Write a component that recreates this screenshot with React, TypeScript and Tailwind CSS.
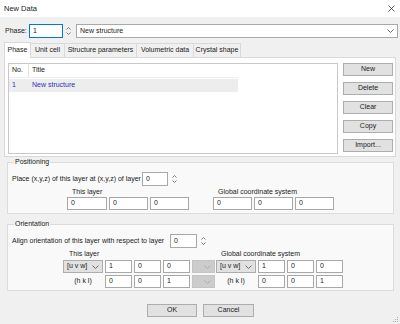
import React from "react";

const font = { fontFamily: '"Liberation Sans", Arial, sans-serif' };

const Spin = () => (
    <div className="flex flex-col items-center justify-center w-[8px] h-[14px] gap-[2px]">
        <svg width="5" height="3" viewBox="0 0 5 3"><path d="M0.5 2.5 L2.5 0.5 L4.5 2.5" fill="none" stroke="#6d6d6d" strokeWidth="0.9" /></svg>
        <svg width="5" height="3" viewBox="0 0 5 3"><path d="M0.5 0.5 L2.5 2.5 L4.5 0.5" fill="none" stroke="#6d6d6d" strokeWidth="0.9" /></svg>
    </div>
);

const Chevron = ({ color = "#606060" }: { color?: string }) => (
    <svg width="7" height="4" viewBox="0 0 7 4"><path d="M0.5 0.5 L3.5 3.5 L6.5 0.5" fill="none" stroke={color} strokeWidth="0.9" /></svg>
);

const Box = ({ value, w }: { value: string; w: string }) => (
    <div className={`${w} h-[13px] bg-white border border-[#a8a8a8] flex items-center pl-[3px] text-[7px] text-[#1a1a1a]`}>{value}</div>
);

const Combo = () => (
    <div className="w-[40px] h-[13px] bg-[#e1e1e1] border border-[#adadad] flex items-center justify-between pl-[3px] pr-[3px] text-[7px] text-[#1a1a1a] whitespace-nowrap">
        <span>[u v w]</span>
        <Chevron />
    </div>
);

const DisabledCombo = () => (
    <div className="w-[23px] h-[13px] bg-[#cccccc] border border-[#c4c4c4] flex items-center justify-end pr-[3px]">
        <Chevron color="#a8a8a8" />
    </div>
);

const HklLabel = () => (
    <div className="w-[40px] h-[13px] flex items-center justify-center text-[7px] text-[#1a1a1a]">(h k l)</div>
);

const Btn = ({ label, w = "w-[50px]" }: { label: string; w?: string }) => (
    <div className={`${w} h-[13px] bg-[#e1e1e1] border border-[#adadad] flex items-center justify-center text-[7px] text-[#1a1a1a]`}>{label}</div>
);

const tabs = [
    { label: "Phase", w: "w-[27px]", active: true },
    { label: "Unit cell", w: "w-[34px]", active: false },
    { label: "Structure parameters", w: "w-[72px]", active: false },
    { label: "Volumetric data", w: "w-[57px]", active: false },
    { label: "Crystal shape", w: "w-[47px]", active: false },
];

export default function App() {
    return (
        <div style={font} className="relative w-[400px] h-[324px] bg-[#f0f0f0] flex flex-col text-[7px] text-[#1a1a1a] overflow-hidden whitespace-nowrap">
            {/* title bar */}
            <div className="h-[17px] bg-white flex items-center justify-between pl-[4px] pr-[5px]">
                <span className="text-[7.5px]">New Data</span>
                <svg width="7" height="7" viewBox="0 0 7 7"><path d="M0.5 0.5 L6.5 6.5 M6.5 0.5 L0.5 6.5" stroke="#333" strokeWidth="0.8" /></svg>
            </div>

            {/* phase row */}
            <div className="mt-[7px] h-[14px] flex items-center pl-[5px]">
                <span className="w-[24px]">Phase:</span>
                <div className="w-[34px] h-[14px] bg-white border border-[#0078d7] flex items-center pl-[3px]">1</div>
                <div className="ml-[1px]"><Spin /></div>
                <div className="ml-[4px] w-[322px] h-[14px] bg-white border border-[#a8a8a8] flex items-center justify-between pl-[3px] pr-[3px]">
                    <span>New structure</span>
                    <Chevron />
                </div>
            </div>

            {/* tabs */}
            <div className="mt-[3px] h-[16px] flex items-end pl-[4px]">
                {tabs.map((t) =>
                    t.active ? (
                        <div key={t.label} className={`${t.w} h-[16px] bg-white border border-b-0 border-[#d9d9d9] flex items-center justify-center relative top-[1px]`}>
                            {t.label}
                        </div>
                    ) : (
                        <div key={t.label} className={`${t.w} h-[14px] bg-[#f0f0f0] border border-l-0 border-b-0 border-[#d9d9d9] flex items-center justify-center`}>
                            {t.label}
                        </div>
                    )
                )}
            </div>

            {/* tab page */}
            <div className="mx-[4px] h-[100px] bg-white border border-[#d9d9d9] flex pt-[5px] pl-[3px]">
                <div className="w-[330px] h-[91px] border border-[#c8c8c8] flex flex-col">
                    <div className="w-[229px] h-[14px] flex items-center border-b border-[#f0f0f0]">
                        <span className="w-[20px] pl-[3px] border-r border-[#e5e5e5] h-full flex items-center">No.</span>
                        <span className="pl-[3px]">Title</span>
                    </div>
                    <div className="w-[229px] h-[13px] mt-[1px] bg-[#ededed] flex items-center text-[#2e2eb8]">
                        <span className="w-[20px] pl-[3px]">1</span>
                        <span className="pl-[3px]">New structure</span>
                    </div>
                </div>
                <div className="ml-[5px] flex flex-col gap-[6px]">
                    <Btn label="New" />
                    <Btn label="Delete" />
                    <Btn label="Clear" />
                    <Btn label="Copy" />
                    <Btn label="Import..." />
                </div>
            </div>

            {/* positioning */}
            <fieldset className="mx-[7px] w-[387px] h-[57px] border border-[#dcdcdc] bg-[#f9f9f9] pl-[4px]">
                <legend className="ml-[2px] px-[1px] h-[10px] leading-[10px]">Positioning</legend>
                <div className="mt-[5px] h-[14px] flex items-center">
                    <span className="w-[130px]">Place (x,y,z) of this layer at (x,y,z) of layer</span>
                    <Box value="0" w="w-[26px] h-[14px]" />
                    <div className="ml-[2px]"><Spin /></div>
                </div>
                <div className="flex ml-[55px] mt-[1px]">
                    <div className="flex flex-col">
                        <span className="pl-[5px] h-[10px] leading-[10px]">This layer</span>
                        <div className="flex gap-[2px]">
                            <Box value="0" w="w-[40px]" />
                            <Box value="0" w="w-[39px]" />
                            <Box value="0" w="w-[39px]" />
                        </div>
                    </div>
                    <div className="flex flex-col ml-[24px]">
                        <span className="pl-[5px] h-[10px] leading-[10px]">Global coordinate system</span>
                        <div className="flex gap-[2px]">
                            <Box value="0" w="w-[39px]" />
                            <Box value="0" w="w-[39px]" />
                            <Box value="0" w="w-[39px]" />
                        </div>
                    </div>
                </div>
            </fieldset>

            {/* orientation */}
            <fieldset className="mt-[5px] mx-[7px] w-[387px] h-[72px] border border-[#dcdcdc] bg-[#f9f9f9] pl-[4px]">
                <legend className="ml-[2px] px-[1px] h-[10px] leading-[10px]">Orientation</legend>
                <div className="mt-[5px] h-[14px] flex items-center">
                    <span className="w-[158px]">Align orientation of this layer with respect to layer</span>
                    <Box value="0" w="w-[27px] h-[14px]" />
                    <div className="ml-[2px]"><Spin /></div>
                </div>
                <div className="flex ml-[51px]">
                    <div className="flex flex-col">
                        <span className="pl-[6px] h-[12px] leading-[12px]">This layer</span>
                        <div className="flex flex-col gap-[2px]">
                            <div className="flex gap-[2px]">
                                <Combo />
                                <Box value="1" w="w-[27px]" />
                                <Box value="0" w="w-[27px]" />
                                <Box value="0" w="w-[27px]" />
                                <DisabledCombo />
                            </div>
                            <div className="flex gap-[2px]">
                                <HklLabel />
                                <Box value="0" w="w-[27px]" />
                                <Box value="0" w="w-[27px]" />
                                <Box value="1" w="w-[27px]" />
                                <DisabledCombo />
                            </div>
                        </div>
                    </div>
                    <div className="flex flex-col ml-[1px]">
                        <span className="pl-[5px] h-[12px] leading-[12px]">Global coordinate system</span>
                        <div className="flex flex-col gap-[2px]">
                            <div className="flex gap-[2px]">
                                <Combo />
                                <Box value="1" w="w-[27px]" />
                                <Box value="0" w="w-[27px]" />
                                <Box value="0" w="w-[27px]" />
                            </div>
                            <div className="flex gap-[2px]">
                                <HklLabel />
                                <Box value="0" w="w-[27px]" />
                                <Box value="0" w="w-[27px]" />
                                <Box value="1" w="w-[27px]" />
                            </div>
                        </div>
                    </div>
                </div>
            </fieldset>

            {/* dialog buttons */}
            <div className="mt-[13px] flex justify-center gap-[6px] pl-[1px]">
                <Btn label="OK" w="w-[50px]" />
                <Btn label="Cancel" w="w-[51px]" />
            </div>

            {/* resize grip */}
            <svg className="absolute right-[1px] bottom-[1px]" width="6" height="6" viewBox="0 0 6 6">
                <rect x="4" y="0" width="1" height="1" fill="#b0b0b0" />
                <rect x="2" y="2" width="1" height="1" fill="#b0b0b0" />
                <rect x="4" y="2" width="1" height="1" fill="#b0b0b0" />
                <rect x="0" y="4" width="1" height="1" fill="#b0b0b0" />
                <rect x="2" y="4" width="1" height="1" fill="#b0b0b0" />
                <rect x="4" y="4" width="1" height="1" fill="#b0b0b0" />
            </svg>
        </div>
    );
}
